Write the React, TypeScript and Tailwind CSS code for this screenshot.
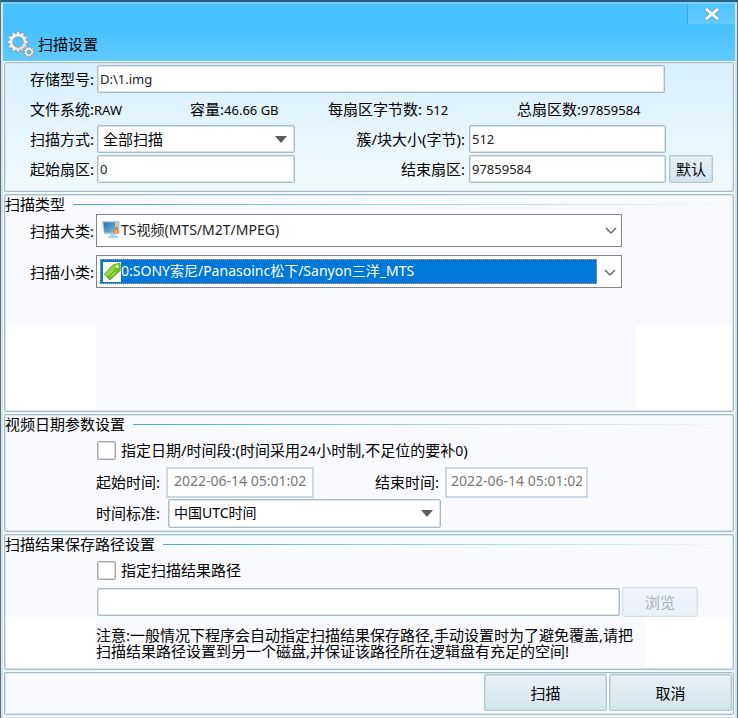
import { useState } from "react";
import type { ReactNode } from "react";

const FIELD =
  "min-w-0 rounded-xs border border-[#a9bcc6] bg-white inset-ring inset-ring-[#d9e4ea]";

const INPUT = `${FIELD} h-7 px-0.5 text-[13px] text-[#222]`;

const BUTTON =
  "rounded-xs border border-[#b3c6d0] bg-linear-to-b from-[#e9f1f6] to-[#d3e4ed] text-[15px] inset-ring inset-ring-[#cfdde4]";

const CHECKBOX =
  "size-[19px] appearance-none rounded-xs border border-[#a5a5a5] bg-white inset-ring inset-ring-[#d8d8d8] checked:bg-[#0078d7]";

const DATE = "h-[31px] border-2 border-[#c9dae5] bg-white pb-1 text-sm text-[#777]";

function Panel({ children, className = "" }: { children: ReactNode; className?: string }) {
  return (
    <section className={`rounded-xs border border-[#a9bcc6] inset-ring inset-ring-[#dbe6ec] ${className}`}>
      {children}
    </section>
  );
}

function GroupTitle({ children }: { children: string }) {
  return (
    <div className="mb-px flex h-[18px] items-center gap-2">
      <h2>{children}</h2>
      <span className="h-px flex-1 bg-linear-to-r from-[#4ea9d6] to-transparent" />
    </div>
  );
}

function Arrow() {
  return (
    <svg viewBox="0 0 12 7" className="pointer-events-none absolute top-[11px] right-2 h-[7px] w-3">
      <path d="M0 0h12L6 7z" fill="#5c5c5c" />
    </svg>
  );
}

function Chevron() {
  return (
    <svg viewBox="0 0 12 8" className="pointer-events-none absolute top-[13px] right-[5px] h-2 w-3">
      <path d="M1 1l5 5 5-5" fill="none" stroke="#6a6a6a" strokeWidth="1.5" />
    </svg>
  );
}

// outline of a toothed wheel: each tooth takes four corners
function gear(cx: number, cy: number, outer: number, inner: number, teeth: number) {
  const step = (Math.PI * 2) / teeth;
  const points: string[] = [];
  for (let i = 0; i < teeth; i++) {
    const corners = [
      [inner, -0.32],
      [outer, -0.2],
      [outer, 0.2],
      [inner, 0.32],
    ];
    for (const [r, offset] of corners) {
      const a = (i + offset) * step;
      points.push(`${(cx + r * Math.cos(a)).toFixed(2)} ${(cy + r * Math.sin(a)).toFixed(2)}`);
    }
  }
  return `M${points.join("L")}Z`;
}

function hole(cx: number, cy: number, r: number) {
  return `M${cx - r} ${cy}a${r} ${r} 0 1 0 ${r * 2} 0a${r} ${r} 0 1 0 ${-r * 2} 0Z`;
}

function GearIcon() {
  return (
    <svg viewBox="0 0 28 28" className="size-7">
      <defs>
        <linearGradient id="steel" x1="0" y1="0" x2="1" y2="1">
          <stop offset="0" stopColor="#fff" />
          <stop offset="0.6" stopColor="#e6eaec" />
          <stop offset="1" stopColor="#b9c2c7" />
        </linearGradient>
      </defs>
      <g fill="url(#steel)" fillRule="evenodd" stroke="#7b909d" strokeWidth="0.8">
        <path d={gear(11, 12, 10.8, 8.8, 12) + hole(11, 12, 5.2)} />
        <path d={gear(22, 22, 5.6, 4.4, 9) + hole(22, 22, 1.9)} />
      </g>
    </svg>
  );
}

function MonitorIcon() {
  return (
    <svg viewBox="0 0 20 20" className="pointer-events-none absolute top-[5px] left-[5px] size-5">
      <defs>
        <linearGradient id="screen" x1="0" y1="0" x2="1" y2="1">
          <stop offset="0" stopColor="#1f6fb2" />
          <stop offset="1" stopColor="#86c2ea" />
        </linearGradient>
      </defs>
      <path d="M1 2h17.500v13H3z" fill="#a9c8dc" />
      <path d="M2.500 3.500H17v10H3.500z" fill="url(#screen)" />
      <path d="M9 15h5l.5 1.500c2 .3 3 .8 3 1.500s-2 1.200-5.500 1.200S6.500 18.700 6.500 18s1-1.200 2.500-1.500z" fill="#a8d6f2" />
      <path d="M14 3h4v5h-4z" fill="#c9c3b6" />
      <path d="M13 14c-1.500-2.500 1-4 1-6.500 3 1 4.500 4.500 2.500 7.500z" fill="#e8822c" />
      <path d="M14.500 14c-.5-1.500.5-2 .5-3.500 1.500 1 1.500 2.500.5 3.500z" fill="#ffd873" />
    </svg>
  );
}

function TagIcon() {
  return (
    <span className="pointer-events-none absolute top-[6px] left-[6px] flex h-5 w-[18px] bg-white">
      <svg viewBox="0 0 18 20" className="h-5 w-[18px]">
        <path d="M1.500 12L10.500 2.500l6.500-1 .2 7L7 18z" fill="#6fbd18" stroke="#5cab12" strokeLinejoin="round" />
        <path d="M2 12l8.800-9 5.700-1L4 14.200z" fill="#93d33c" />
        <path d="M5.500 12.500l5-4.500M7.500 14.500l5-4.500" stroke="#c4ea8c" strokeWidth="1" />
        <circle cx="14.200" cy="4.500" r="1.500" fill="#fff" />
      </svg>
    </span>
  );
}

export default function App() {
  const [useDate, setUseDate] = useState(false);
  const [usePath, setUsePath] = useState(false);

  return (
    <main className="border border-t-2 border-[#5b6e79] border-t-[#23607f] bg-[#f1f8fc] font-['Noto_Sans','Noto_Sans_CJK_SC',sans-serif] text-[15px] leading-5 text-black">
      <div className="border-2 border-[#d5e5ee] border-t-[#7dcdf6]">
        <header className="flex h-[57px] items-start justify-between bg-linear-to-b from-[#48c2ff] from-50% to-[#61cafe]">
          <div className="flex items-center gap-[3px] self-end pb-[3px] pl-1">
            <GearIcon />
            <h1>扫描设置</h1>
          </div>
          <button aria-label="关闭" className="flex h-5 w-12 items-center justify-center border-l border-[#3fa9dd] bg-linear-to-b from-white/5 to-white/15">
            <svg viewBox="0 0 16 14" className="h-3.5 w-4">
              <path d="M2 2l12 10M14 2L2 12" stroke="#3b8db8" strokeWidth="4.500" />
              <path d="M2 2l12 10M14 2L2 12" stroke="#fff" strokeWidth="3" />
            </svg>
          </button>
        </header>

        <div className="flex flex-col gap-0.5 px-px pt-px pb-0.5">
          <Panel className="h-[130px] bg-linear-to-b from-[#d7f0ff] to-[#f3f9fc] pt-px pl-[25px]">
            <div className="flex h-[30px] items-center">
              <label htmlFor="model" className="w-[67px]">存储型号:</label>
              <input id="model" defaultValue="D:\1.img" className={`${INPUT} w-[568px]`} />
            </div>
            <div className="flex h-[30px] items-center">
              <p className="w-[160px]">文件系统:<span className="text-[13px]">RAW</span></p>
              <p className="w-[138px]">容量:<span className="text-[13px]">46.66 GB</span></p>
              <p className="w-[189px]">每扇区字节数: <span className="text-[13px]">512</span></p>
              <p>总扇区数:<span className="text-[13px]">97859584</span></p>
            </div>
            <div className="flex h-[30px] items-center">
              <label htmlFor="mode" className="w-[67px]">扫描方式:</label>
              <div className="relative">
                <select id="mode" className={`${FIELD} block h-7 w-[198px] appearance-none pl-[5px]`}>
                  <option>全部扫描</option>
                </select>
                <Arrow />
              </div>
              <label htmlFor="cluster" className="w-[174px] pr-1 text-right">簇/块大小(字节):</label>
              <input id="cluster" defaultValue="512" className={`${INPUT} w-[197px]`} />
            </div>
            <div className="flex h-[30px] items-center">
              <label htmlFor="start" className="w-[67px]">起始扇区:</label>
              <input id="start" defaultValue="0" className={`${INPUT} w-[198px]`} />
              <label htmlFor="end" className="w-[174px] pr-1 text-right">结束扇区:</label>
              <input id="end" defaultValue="97859584" className={`${INPUT} w-[197px]`} />
              <button className={`${BUTTON} ml-[3px] h-7 w-11`}>默认</button>
            </div>
          </Panel>

          <Panel className="h-[218px] bg-[#f9fafd]">
            <GroupTitle>扫描类型</GroupTitle>
            <div className="flex h-[33px] items-center pl-[25px]">
              <label htmlFor="major" className="w-[66px]">扫描大类:</label>
              <div className="relative">
                <select id="major" className="block h-[33px] w-[526px] appearance-none border border-[#848484] bg-white pb-px pl-6 text-sm text-[#222]">
                  <option>TS视频(MTS/M2T/MPEG)</option>
                </select>
                <MonitorIcon />
                <Chevron />
              </div>
            </div>
            <div className="mt-2 flex h-[33px] items-center pl-[25px]">
              <label htmlFor="minor" className="w-[66px]">扫描小类:</label>
              <div className="relative border border-[#848484] bg-white py-[3px] pr-6 pl-[3px]">
                <select id="minor" className="block h-[25px] w-[497px] appearance-none border border-dotted border-[#e09b63] bg-[#0078d7] pb-px pl-5 text-sm text-white">
                  <option>0:SONY索尼/Panasoinc松下/Sanyon三洋_MTS</option>
                </select>
                <TagIcon />
                <Chevron />
              </div>
            </div>
            <div className="mx-px mt-[37px] flex h-[85px] justify-between">
              <span className="w-[90px] bg-white" />
              <span className="w-24 bg-white" />
            </div>
          </Panel>

          <Panel className="h-[118px] bg-[#f9fafd]">
            <GroupTitle>视频日期参数设置</GroupTitle>
            <div className="pl-[91px]">
              <label className="flex h-8 items-center gap-[5px] pl-px">
                <input
                  type="checkbox"
                  checked={useDate}
                  onChange={(e) => setUseDate(e.target.checked)}
                  className={CHECKBOX}
                />
                <span>
                  指定日期/时间段:(时间采用<span className="text-sm">24</span>小时制,不足位的要补<span className="text-sm">0</span>)
                </span>
              </label>
              <div className="flex h-8 items-center">
                <label htmlFor="from" className="w-[70px]">起始时间:</label>
                <input id="from" disabled={!useDate} defaultValue="2022-06-14 05:01:02" className={`${DATE} w-[148px] px-1.5`} />
                <label htmlFor="to" className="w-[131px] pr-1.5 text-right">结束时间:</label>
                <input id="to" disabled={!useDate} defaultValue="2022-06-14 05:01:02" className={`${DATE} w-[143px] px-1`} />
              </div>
              <div className="flex h-[30px] items-center">
                <label htmlFor="zone" className="w-[72px]">时间标准:</label>
                <div className="relative">
                  <select id="zone" className={`${FIELD} block h-[29px] w-[273px] appearance-none pl-[5px] text-sm`}>
                    <option>中国UTC时间</option>
                  </select>
                  <Arrow />
                </div>
              </div>
            </div>
          </Panel>

          <Panel className="h-[136px] bg-[#f9fafd]">
            <GroupTitle>扫描结果保存路径设置</GroupTitle>
            <div className="pl-[91px]">
              <label className="flex h-8 items-center gap-[5px] pl-px">
                <input
                  type="checkbox"
                  checked={usePath}
                  onChange={(e) => setUsePath(e.target.checked)}
                  className={CHECKBOX}
                />
                指定扫描结果路径
              </label>
              <div className="flex h-[31px] items-center gap-0.5 pl-px">
                <input aria-label="扫描结果路径" disabled={!usePath} className={`${INPUT} w-[523px]`} />
                <button disabled={!usePath} className={`${BUTTON} h-[30px] w-19 disabled:border-[#d3e0e7] disabled:from-[#f0f5f9] disabled:to-[#e9f1f7] disabled:text-[#a9afb3] disabled:inset-ring-[#e6eef3]`}>
                  浏览
                </button>
              </div>
            </div>
            <div className="mx-px flex h-[51px] bg-white pl-[90px]">
              <p className="w-[549px] bg-[#f9fafd] pt-2.5 leading-4">
                注意:一般情况下程序会自动指定扫描结果保存路径,手动设置时为了避免覆盖,请把<br />
                扫描结果路径设置到另一个磁盘,并保证该路径所在逻辑盘有充足的空间!
              </p>
            </div>
          </Panel>

          <Panel className="flex h-[43px] items-start justify-end gap-0.5 bg-[#f9fafd] p-px">
            <button className={`${BUTTON} h-[37px] w-[123px]`}>扫描</button>
            <button className={`${BUTTON} h-[37px] w-[123px]`}>取消</button>
          </Panel>
        </div>
      </div>
    </main>
  );
}
